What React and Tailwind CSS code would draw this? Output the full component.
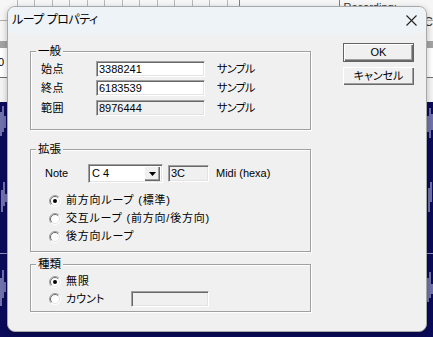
import React from "react";

const FONT = '"Liberation Sans", "Noto Sans CJK JP", sans-serif';

function Radio({ checked }) {
  return (
    <svg width="12" height="12" viewBox="0 0 12 12" className="shrink-0">
      <circle cx="6" cy="6" r="5" fill="#fff" />
      <path d="M2.1 9.9 A5.5 5.5 0 0 1 9.9 2.1" fill="none" stroke="#a0a0a0" />
      <path d="M2.8 9.2 A4.5 4.5 0 0 1 9.2 2.8" fill="none" stroke="#696969" />
      <path d="M9.9 2.1 A5.5 5.5 0 0 1 2.1 9.9" fill="none" stroke="#ffffff" />
      <path d="M9.2 2.8 A4.5 4.5 0 0 1 2.8 9.2" fill="none" stroke="#e3e3e3" />
      {checked && <circle cx="6" cy="6" r="2" fill="#000" />}
    </svg>
  );
}

function Field({ value, readOnly, className = "" }) {
  return (
    <div
      className={`h-[16px] border border-t-[#a0a0a0] border-l-[#a0a0a0] border-b-white border-r-white shadow-[inset_1px_1px_0_#696969,inset_-1px_-1px_0_#e3e3e3] flex items-center pl-[2px] text-[11px] leading-none ${
        readOnly ? "bg-[#f0f0f0]" : "bg-white"
      } ${className}`}
    >
      {value}
    </div>
  );
}

function Group({ label, className = "", children }) {
  return (
    <div className={`relative border border-[#a0a0a0] shadow-[1px_1px_0_#fff,inset_1px_1px_0_#fff] ${className}`}>
      <span className="absolute -top-[9px] left-[5px] px-[2px] bg-[#f0f0f0] text-[11.5px] leading-[16px]">
        {label}
      </span>
      {children}
    </div>
  );
}

function Button({ children, isDefault }) {
  return (
    <div
      className={`w-[71px] flex items-center justify-center text-[11px] ${
        isDefault
          ? "h-[19px] border border-[#646464] shadow-[inset_1px_1px_0_#fff,inset_-1px_-1px_0_#696969,inset_-2px_-2px_0_#a0a0a0]"
          : "h-[18px] shadow-[inset_1px_1px_0_#fff,inset_-1px_-1px_0_#696969,inset_-2px_-2px_0_#a0a0a0]"
      }`}
    >
      {children}
    </div>
  );
}

function Backdrop() {
  const cells = [18, 35, 53, 70, 88, 105, 123, 140, 158, 175, 193, 210, 228];
  return (
    <div className="absolute inset-0 flex flex-col">
      <div className="relative h-[41px] bg-[#f6f6f6]">
        <div className="flex h-[21px] border-b border-[#b0b0b0]">
          {cells.map((c, i) => (
            <div key={i} className="w-[17.5px] border-r border-[#b8b8b8]" />
          ))}
          <div className="w-[12px] border-r border-[#808080]" />
          <div className="w-[100px] border-r border-[#808080]" />
          <div className="pl-[4px] text-[11px] leading-[12px] text-[#333] mt-[1px]">Recording:</div>
        </div>
        <div className="absolute right-0 top-[16px] text-[12px] text-[#333] leading-none">DC</div>
      </div>
      <div className="h-[7px] bg-[#a4a4a4]" />
      <div className="h-[29px] bg-white flex items-center text-[11px] -indent-[2px]">0</div>
      <div className="h-[1px] bg-[#707070]" />
      <div className="h-[24px] bg-[#f4f4f4]" />
      <div className="relative flex-1 bg-[#0b0b5a]">
        <svg width="433" height="235" className="absolute inset-0">
          <g stroke="#d8d8ff" strokeWidth="1">
            <path d="M1 10V34M3 4V30M5 14V26M2 88V110M4 80V104M6 92V100M1 176V204M3 168V196M5 180V190" />
            <path d="M428 14V30M430 6V36M432 12V28M429 86V110M431 80V100M428 176V200M430 170V196M432 182V192" />
            <path d="M0 151.5H7M426 151.5H433" stroke="#9090c0" />
          </g>
        </svg>
      </div>
    </div>
  );
}

export default function App() {
  return (
    <div
      className="relative w-[433px] h-[337px] overflow-hidden text-black [font-feature-settings:'palt']"
      style={{ fontFamily: FONT }}
    >
      <Backdrop />
      <div className="absolute left-[7px] top-[6px] w-[420px] h-[326px] rounded-[8px] border border-[#a8a8a8] bg-[#f0f0f0] overflow-hidden flex flex-col shadow-[0_2px_6px_rgba(0,0,0,0.25)]">
        <div className="h-[26px] bg-[#eef3f8] flex items-center justify-between pl-[4px] pr-[9px]">
          <span className="text-[12px] tracking-[-0.5px]">ループ プロパティ</span>
          <svg width="11" height="11" viewBox="0 0 11 11">
            <path d="M0.5 0.5L10.5 10.5M10.5 0.5L0.5 10.5" stroke="#222" strokeWidth="1.1" />
          </svg>
        </div>
        <div className="flex flex-1 pl-[22px]">
          <div className="w-[281px] flex flex-col">
            <Group label="一般" className="mt-[18px] h-[79px]">
              <div className="flex flex-col pt-[9px] pl-[10px] text-[11px]">
                {[
                  ["始点", "3388241", false],
                  ["終点", "6183539", false],
                  ["範囲", "8976444", true],
                ].map(([l, v, ro], i) => (
                  <div key={l} className={`flex items-center h-[16px] ${i === 1 ? "mt-[3px]" : i === 2 ? "mt-[4px]" : ""}`}>
                    <span className="w-[55px] tracking-[0.5px]">{l}</span>
                    <Field value={v} readOnly={ro} className="w-[109px]" />
                    <span className="ml-[12px] tracking-[-0.6px]">サンプル</span>
                  </div>
                ))}
              </div>
            </Group>

            <Group label="拡張" className="mt-[19px] h-[103px]">
              <div className="flex items-center pt-[14px] pl-[14px] text-[11px]">
                <span className="w-[43px]">Note</span>
                <div className="w-[75px] h-[19px] border border-t-[#a0a0a0] border-l-[#a0a0a0] border-b-white border-r-white shadow-[inset_1px_1px_0_#696969,inset_-1px_-1px_0_#e3e3e3] bg-white flex items-center pl-[3px] pr-[2px] py-[2px]">
                  <span className="flex-1 leading-none">C 4</span>
                  <div className="w-[16px] h-[15px] bg-[#f0f0f0] shadow-[inset_1px_1px_0_#fff,inset_-1px_-1px_0_#696969,inset_-2px_-2px_0_#a0a0a0] flex items-center justify-center">
                    <svg width="7" height="4" viewBox="0 0 7 4">
                      <path d="M0 0H7L3.5 4Z" fill="#000" />
                    </svg>
                  </div>
                </div>
                <Field value="3C" readOnly className="w-[41px] h-[17px] ml-[5px]" />
                <span className="ml-[7px]">Midi (hexa)</span>
              </div>
              <div className="flex flex-col pl-[18px] mt-[11px] gap-[5px] text-[11px] tracking-[0.8px]">
                <div className="flex items-center gap-[5px] h-[13px]">
                  <Radio checked />
                  <span>前方向ループ (標準)</span>
                </div>
                <div className="flex items-center gap-[5px] h-[13px]">
                  <Radio />
                  <span>交互ループ (前方向/後方向)</span>
                </div>
                <div className="flex items-center gap-[5px] h-[13px]">
                  <Radio />
                  <span>後方向ループ</span>
                </div>
              </div>
            </Group>

            <Group label="種類" className="mt-[12px] h-[48px]">
              <div className="flex flex-col pl-[18px] pt-[10px] text-[11px]">
                <div className="flex items-center gap-[5px] h-[13px]">
                  <Radio checked />
                  <span className="tracking-[1px]">無限</span>
                </div>
                <div className="flex items-center h-[16px] mt-[3px]">
                  <Radio />
                  <span className="ml-[5px] w-[65px]">カウント</span>
                  <Field value="" readOnly className="w-[78px]" />
                </div>
              </div>
            </Group>
          </div>
          <div className="flex flex-col gap-[5px] pt-[10px] ml-[32px]">
            <Button isDefault>OK</Button>
            <Button>キャンセル</Button>
          </div>
        </div>
      </div>
    </div>
  );
}
